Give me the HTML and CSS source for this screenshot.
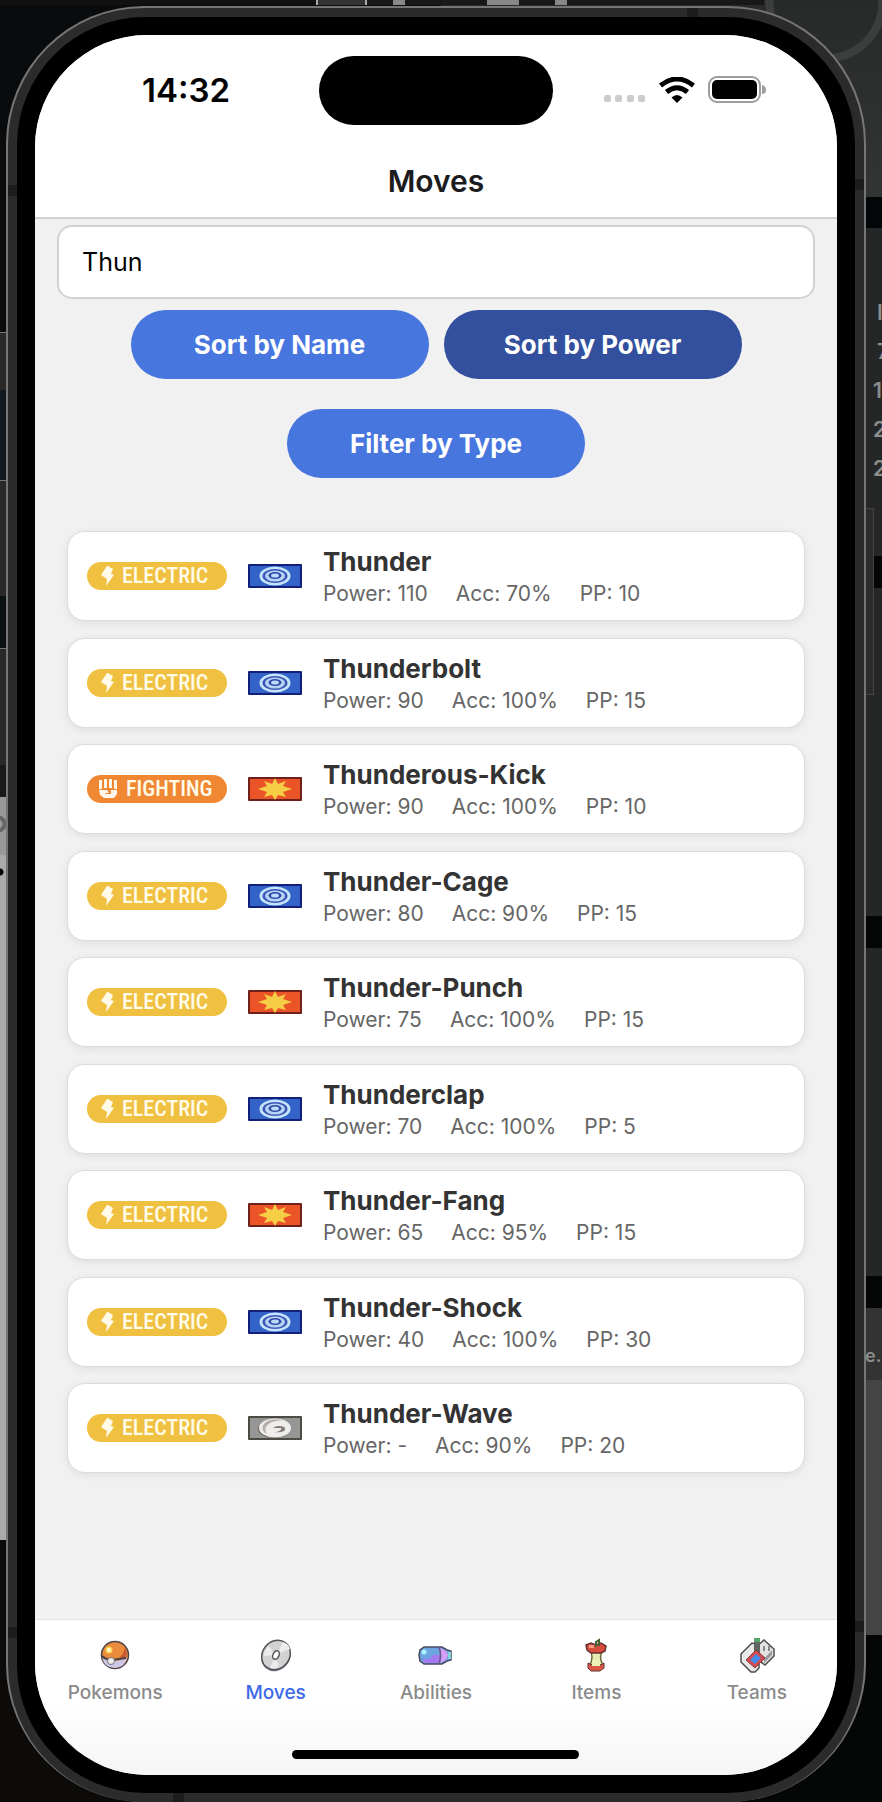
FILE: index.html
```html
<!DOCTYPE html>
<html lang="en">
<head>
<meta charset="utf-8">
<meta name="viewport" content="width=device-width, initial-scale=1">
<title>Moves</title>
<link rel="stylesheet" href="styles.css">
</head>
<body>
<svg class="sprites" aria-hidden="true">
  <symbol id="bolt" viewBox="0 0 14 20"><path d="M6 0h1l5 3-2 5 3 1-8 11 1-7-6-4z" fill="#fffbe8"/></symbol>
  <symbol id="fist" viewBox="0 0 18 20"><path d="M0 1h3v9H0zM5 0h3v9H5zM10 0h3v9h-3zM15 1h3v9h-3zM0 11h8l2 3h-4l1 1h5v-4h6v4l-3 4H5l-4-3z" fill="#fff6ec"/></symbol>
  <symbol id="special" viewBox="0 0 54 24">
    <rect width="54" height="24" rx="1" fill="#12207c"/><rect x="2" y="2" width="50" height="20" fill="#3463c8"/>
    <ellipse cx="27" cy="12" rx="15.500" ry="9.500" fill="#c5e3fa"/><ellipse cx="27" cy="12" rx="12.500" ry="7" fill="#3d56b5"/>
    <ellipse cx="27" cy="12" rx="10" ry="5.500" fill="#b5d5f6"/><ellipse cx="27" cy="11.500" rx="6.500" ry="3.500" fill="#3447a7"/><ellipse cx="27" cy="11.500" rx="4" ry="2" fill="#b9dcf8"/>
  </symbol>
  <symbol id="physical" viewBox="0 0 54 24">
    <rect width="54" height="24" rx="1" fill="#6e211a"/><rect x="2" y="2" width="50" height="20" fill="#ea5427"/>
    <path d="M27 1l3 6 8-3-3 5 9 3-9 3 3 5-8-2-3 5-3-5-8 2 3-5-9-3 9-3-3-5 8 3z" fill="#f6ce45"/>
  </symbol>
  <symbol id="status" viewBox="0 0 54 24">
    <rect width="54" height="24" rx="1" fill="#4a4b43"/><rect x="2" y="2" width="50" height="20" fill="#969696"/>
    <ellipse cx="26" cy="13" rx="16" ry="9" fill="#716664"/><ellipse cx="27" cy="12" rx="16" ry="9.500" fill="#efedec"/>
    <path d="M36 5C28 2 19 4 16 8c-3 4-1 8 3 10-3-4-2-8 3-11 4-2 9-3 14-2z" fill="#b3aeac"/>
    <path d="M25 12h8c1 2-2 4-7 4 8 1 12-1 11-4-1-2-8-3-12 0z" fill="#857b79"/>
  </symbol>
</svg>
<main class="stage">
  <div class="phone">
    <span class="side-button"></span>
    <div class="bezel">
      <div class="screen">
        <header class="header">
          <div class="status-bar">
            <time class="clock">14:32</time>
            <span class="island"></span>
            <span class="status-icons">
              <svg width="42" height="8" viewBox="0 0 42 8" fill="#ccc"><rect x="0" y="0" width="7" height="7" rx="2"/><rect x="11" y="0" width="7" height="7" rx="2"/><rect x="23" y="0" width="7" height="7" rx="2"/><rect x="34" y="0" width="7" height="7" rx="2"/></svg>
              <svg width="36" height="26" viewBox="0 0 36 26"><path d="M1.500 8.500Q18-4.500 34.500 8.500" fill="none" stroke="#000" stroke-width="5"/><path d="M7.500 15Q18 6.500 28.500 15" fill="none" stroke="#000" stroke-width="5"/><path d="M12.500 20.500Q18 15.500 23.500 20.500L18 26z"/></svg>
              <svg width="58" height="27" viewBox="0 0 58 27"><rect x="1" y="1" width="51" height="25" rx="8" fill="none" stroke="#9d9d9d" stroke-width="2"/><rect x="4" y="4" width="45" height="19" rx="5"/><path d="M54 9q4 1 4 5t-4 4z" fill="#9d9d9d"/></svg>
            </span>
          </div>
          <h1 class="title">Moves</h1>
        </header>
        <input class="search" type="text" value="Thun" aria-label="Search moves">
        <div class="actions">
          <button class="action" type="button">Sort by Name</button>
          <button class="action active" type="button">Sort by Power</button>
          <button class="action" type="button">Filter by Type</button>
        </div>
        <ul class="moves">
          <li class="move"><span class="type"><svg class="bolt"><use href="#bolt"/></svg>ELECTRIC</span><svg class="category"><use href="#special"/></svg><div class="info"><h2>Thunder</h2><p><span>Power: 110</span><span>Acc: 70%</span><span>PP: 10</span></p></div></li>
          <li class="move"><span class="type"><svg class="bolt"><use href="#bolt"/></svg>ELECTRIC</span><svg class="category"><use href="#special"/></svg><div class="info"><h2>Thunderbolt</h2><p><span>Power: 90</span><span>Acc: 100%</span><span>PP: 15</span></p></div></li>
          <li class="move"><span class="type fighting"><svg class="fist"><use href="#fist"/></svg>FIGHTING</span><svg class="category"><use href="#physical"/></svg><div class="info"><h2>Thunderous-Kick</h2><p><span>Power: 90</span><span>Acc: 100%</span><span>PP: 10</span></p></div></li>
          <li class="move"><span class="type"><svg class="bolt"><use href="#bolt"/></svg>ELECTRIC</span><svg class="category"><use href="#special"/></svg><div class="info"><h2>Thunder-Cage</h2><p><span>Power: 80</span><span>Acc: 90%</span><span>PP: 15</span></p></div></li>
          <li class="move"><span class="type"><svg class="bolt"><use href="#bolt"/></svg>ELECTRIC</span><svg class="category"><use href="#physical"/></svg><div class="info"><h2>Thunder-Punch</h2><p><span>Power: 75</span><span>Acc: 100%</span><span>PP: 15</span></p></div></li>
          <li class="move"><span class="type"><svg class="bolt"><use href="#bolt"/></svg>ELECTRIC</span><svg class="category"><use href="#special"/></svg><div class="info"><h2>Thunderclap</h2><p><span>Power: 70</span><span>Acc: 100%</span><span>PP: 5</span></p></div></li>
          <li class="move"><span class="type"><svg class="bolt"><use href="#bolt"/></svg>ELECTRIC</span><svg class="category"><use href="#physical"/></svg><div class="info"><h2>Thunder-Fang</h2><p><span>Power: 65</span><span>Acc: 95%</span><span>PP: 15</span></p></div></li>
          <li class="move"><span class="type"><svg class="bolt"><use href="#bolt"/></svg>ELECTRIC</span><svg class="category"><use href="#special"/></svg><div class="info"><h2>Thunder-Shock</h2><p><span>Power: 40</span><span>Acc: 100%</span><span>PP: 30</span></p></div></li>
          <li class="move"><span class="type"><svg class="bolt"><use href="#bolt"/></svg>ELECTRIC</span><svg class="category"><use href="#status"/></svg><div class="info"><h2>Thunder-Wave</h2><p><span>Power: -</span><span>Acc: 90%</span><span>PP: 20</span></p></div></li>
        </ul>
        <nav class="tabs">
          <a class="tab" href="#pokemons"><svg viewBox="0 0 36 36"><circle cx="18" cy="18" r="13.500" fill="#eb8b3c" stroke="#4b4548" stroke-width="1.500"/><path d="M28 10q3 6 1 12l-7-1q5-4 6-11z" fill="#c85b31"/><path d="M5 20q5 5 12 4 8 0 13-4-1 10-12 11Q7 31 5 20z" fill="#cfc7e8"/><path d="M5 19q4 4 10 4l14-2" fill="none" stroke="#4b4548" stroke-width="2"/><circle cx="12" cy="13" r="3.500" fill="#fbd34e"/><circle cx="12" cy="13" r="2" fill="#fff8d2"/><circle cx="14" cy="24" r="3.500" fill="#eee" stroke="#777" stroke-width="1"/></svg>Pokemons</a>
          <a class="tab current" href="#moves" aria-current="page"><svg viewBox="0 0 36 36"><ellipse cx="18" cy="19" rx="14" ry="16" transform="rotate(38 18 19)" fill="#77738a"/><ellipse cx="18" cy="18" rx="13.500" ry="15.500" transform="rotate(38 18 18)" fill="#d2d2d2" stroke="#55535a" stroke-width="1.500"/><path d="M17 18L6 19q0-6 5-10zM19 17l6-12q6 2 7 7zM17 20l-5 11q6 1 9-2z" fill="#ececec"/><ellipse cx="18" cy="18" rx="3" ry="4.500" transform="rotate(25 18 18)" fill="#fff" stroke="#555" stroke-width="1.500"/></svg>Moves</a>
          <a class="tab" href="#abilities"><svg viewBox="0 0 36 36"><path d="M6 10h18l5 3 4 1v9l-4 1-5 3H6l-4-3-1-6 1-5z" fill="#6ea4e1" stroke="#494a63" stroke-width="1.500"/><path d="M4 22h7l4-4h7v8H7z" fill="#a47af0"/><path d="M22 11l6 3 2 4-2 5-6 3q3-7 0-15z" fill="#d59df5"/><path d="M21 10q3 8 0 17" fill="none" stroke="#6f558e" stroke-width="1.500"/><path d="M30 15h3v7h-3z" fill="#80d2dd"/><circle cx="6" cy="15" r="2.500" fill="#aaf4ff"/></svg>Abilities</a>
          <a class="tab" href="#items"><svg viewBox="0 0 36 36"><path d="M12 13q4 7 0 15h13q-5-8 0-15z" fill="#e6edb0" stroke="#6b693b" stroke-width="1.500"/><path d="M8 8l5-2 5 2 5-2 5 3-1 5-4 2H13l-4-3z" fill="#d94c3e" stroke="#653030" stroke-width="1.500"/><path d="M11 8h5v3h-5z" fill="#f19a80"/><path d="M18 10V5l3-2v6" fill="none" stroke="#486131" stroke-width="2"/><path d="M10 26l4 2h9l3-2v5l-4 3h-9l-3-3z" fill="#dc5a45" stroke="#653030" stroke-width="1"/><path d="M14 23h8v6h-8z" fill="#edf1b5"/></svg>Items</a>
          <a class="tab" href="#teams"><svg viewBox="0 0 36 36"><path d="M13 6L2 17v8l10 10h4l4-4V8z" fill="#e9e9e9" stroke="#4c4c4c" stroke-width="1.500"/><path d="M18 9l7-6 10 9v7l-9 9-7-5z" fill="#e3e3e3" stroke="#4c4c4c" stroke-width="1.500"/><path d="M33 13v5l-8 8v-4z" fill="#999"/><path d="M15 3h6v14h-6z" fill="#626262"/><path d="M15 1h6v4h-6z" fill="#56a56a"/><path d="M17 13l9 8-10 10-9-8z" fill="#d54c50" stroke="#7d393d" stroke-width="1"/><path d="M17 17l5 4-6 6-5-4z" fill="#438bed"/><path d="M25 9v5m5-5v5" stroke="#888" stroke-width="2"/></svg>Teams</a>
          <span class="home-indicator"></span>
        </nav>
      </div>
    </div>
  </div>
  <aside class="backdrop" aria-hidden="true"><span class="inset">I</span><span class="inset">7</span><span>1</span><span>2</span><span>2</span><span class="ellipsis">e...</span></aside>
</main>
</body>
</html>
```
FILE: styles.css
```css
* { box-sizing: border-box; }

body {
  margin: 0;
  font-family: Inter, "Liberation Sans", sans-serif;
  background: #090a0a;
}

.sprites { position: absolute; width: 0; height: 0; }

/* Dark desktop behind the device */
.stage {
  display: flex;
  min-height: 100vh;
  padding: 6px 0 0 6px;
  overflow: hidden;
  background:
    radial-gradient(circle at 0 872px, #000 3px, transparent 4px) left / 6px 100% no-repeat,
    radial-gradient(circle at -2px 824px, transparent 4px, #666 5px 8px, transparent 9px) left / 6px 100% no-repeat,
    linear-gradient(90deg, #111 316px, #aaa 316px 318px, #333 318px 365px, #aaa 365px 367px, #181818 367px 393px, #888 393px 405px, #181818 405px 487px, #888 487px 519px, #181818 519px 555px, #888 555px 567px, #181818 567px 764px, transparent 764px) top / 100% 5px no-repeat,
    radial-gradient(circle at 826px 2px, transparent 52px, #3c3d3d 53px 60px, transparent 61px) top / 100% 90px no-repeat,
    linear-gradient(#282929, #333535 197px, #030608 197px 228px, #242726 228px 556px, #050606 556px 588px, #242726 588px 916px, #050606 916px 948px, #242726 948px 1276px, #050606 1276px 1308px, #333 1308px 1380px, #444 1380px 1635px, #050606 1635px) right / 50% 100% no-repeat,
    linear-gradient(#090b0c 332px, #777 332px 333px, #292929 333px 390px, #11191e 390px 480px, #777 480px 481px, #292929 481px 596px, #0b1013 596px 648px, #777 648px 649px, #292929 649px 765px, #191b1b 765px 797px, #999 797px 855px, #aaa 855px 1540px, #0c0b09 1540px) left / 50% 100% no-repeat;
}

.phone {
  position: relative;
  display: flex;
  flex: 1;
  padding: 9px;
  border: 2px solid #767676;
  border-bottom-width: 0;
  border-radius: 138px;
  background:
    linear-gradient(#1d1d1d, #1d1d1d) 0 177px / 9px 11px no-repeat,
    linear-gradient(#1d1d1d, #1d1d1d) 100% 171px / 9px 11px no-repeat,
    linear-gradient(#1d1d1d, #1d1d1d) 0 1619px / 9px 11px no-repeat,
    linear-gradient(#1d1d1d, #1d1d1d) 100% 1613px / 9px 11px no-repeat,
    linear-gradient(#1d1d1d, #1d1d1d) 679px 0 / 11px 9px no-repeat,
    linear-gradient(#1d1d1d, #1d1d1d) 165px 100% / 11px 9px no-repeat,
    #2b2b2b;
}

.side-button {
  position: absolute;
  top: 500px;
  right: -10px;
  width: 8px;
  height: 187px;
  border: 1px solid #444;
  border-left: 0;
  background: #2b2b2b;
}

.bezel {
  display: flex;
  flex: 1;
  padding: 18px;
  border-radius: 128px;
  background: #000;
}

.screen {
  display: flex;
  flex: 1;
  flex-direction: column;
  min-width: 0;
  overflow: hidden;
  border-radius: 112px;
  background: #f1f1f1;
}

.header {
  border-bottom: 2px solid #d2d2d2;
  background: #fff;
}

.status-bar {
  display: grid;
  grid-template-columns: 1fr 234px 1fr;
  align-items: center;
  padding-top: 21px;
}

.clock {
  padding: 0 0 2px 18px;
  font-size: 33px;
  font-weight: 600;
  line-height: 40px;
  text-align: center;
}

.island {
  height: 69px;
  border-radius: 35px;
  background: #000;
}

.status-icons {
  display: flex;
  align-items: flex-end;
  gap: 13px;
  padding: 0 0 3px 51px;
}

.title {
  margin: 0;
  padding: 37px 0 16px;
  color: #1c1c1e;
  font-size: 30px;
  font-weight: 600;
  line-height: 39px;
  text-align: center;
}

.search {
  height: 74px;
  margin: 6px 22px 0;
  padding: 0 23px;
  border: 2px solid #d2d2d2;
  border-radius: 15px;
  background: #fff;
  color: #000;
  font: 400 25px/30px Inter, sans-serif;
}

.actions {
  display: flex;
  flex-wrap: wrap;
  justify-content: center;
  gap: 30px 15px;
  margin: 11px 23px 53px;
}

.action {
  width: 298px;
  height: 69px;
  border: 0;
  border-radius: 35px;
  background: #4876df;
  color: #fff;
  font: 700 26px/32px Inter, sans-serif;
}

.action.active { background: #33509e; }

.moves {
  display: flex;
  flex: 1;
  flex-direction: column;
  justify-content: space-between;
  gap: 15px;
  margin: 0 32px;
  padding: 0 0 146px;
  list-style: none;
}

.move {
  display: flex;
  align-items: center;
  padding: 12px 19px;
  border: 1px solid #dcdce0;
  border-radius: 18px;
  background: #fff;
  box-shadow: 0 2px 8px rgba(0, 0, 0, 0.08);
}

.type {
  display: flex;
  align-items: center;
  width: 140px;
  height: 28px;
  padding-left: 14px;
  border-radius: 14px;
  background: #f0c040;
  color: #fffbe8;
  font: 500 22px/28px "Liberation Sans Narrow", "Roboto Condensed", Roboto, sans-serif;
}

.type.fighting { padding-left: 12px; background: #f08833; }

.bolt { width: 14px; height: 20px; margin-right: 7px; }
.fist { width: 18px; height: 20px; margin-right: 9px; }

.category {
  width: 54px;
  height: 24px;
  margin: 0 21px;
}

.info h2 {
  margin: 0;
  color: #333;
  font-size: 26px;
  font-weight: 700;
  line-height: 36px;
}

.info p {
  display: flex;
  gap: 28px;
  margin: 0;
  color: #666;
  font-size: 21px;
  line-height: 28px;
}

.tabs {
  display: grid;
  grid-template-columns: repeat(5, 1fr);
  justify-items: center;
  padding: 17px 0 16px;
  border-top: 1px solid #e2e2e2;
  background: linear-gradient(#fff 55%, #f5f5f5);
}

.tab {
  display: flex;
  flex-direction: column;
  align-items: center;
  gap: 6px;
  color: #8b8b8b;
  font-size: 19px;
  font-weight: 500;
  line-height: 28px;
  text-decoration: none;
}

.tab svg { width: 36px; height: 36px; }

.tab.current { color: #3c69e7; }

.home-indicator {
  grid-column: 1 / -1;
  width: 287px;
  height: 9px;
  margin-top: 43px;
  border-radius: 5px;
  background: #000;
}

.backdrop {
  display: flex;
  flex-direction: column;
  width: 16px;
  padding: 287px 0 0 7px;
  overflow: hidden;
  color: #8b8d8d;
  font-size: 21px;
  font-weight: 600;
  line-height: 39px;
}

.backdrop .inset { padding-left: 4px; }
.backdrop .ellipsis { margin: 848px 0 0 -8px; font-size: 18px; }
```
